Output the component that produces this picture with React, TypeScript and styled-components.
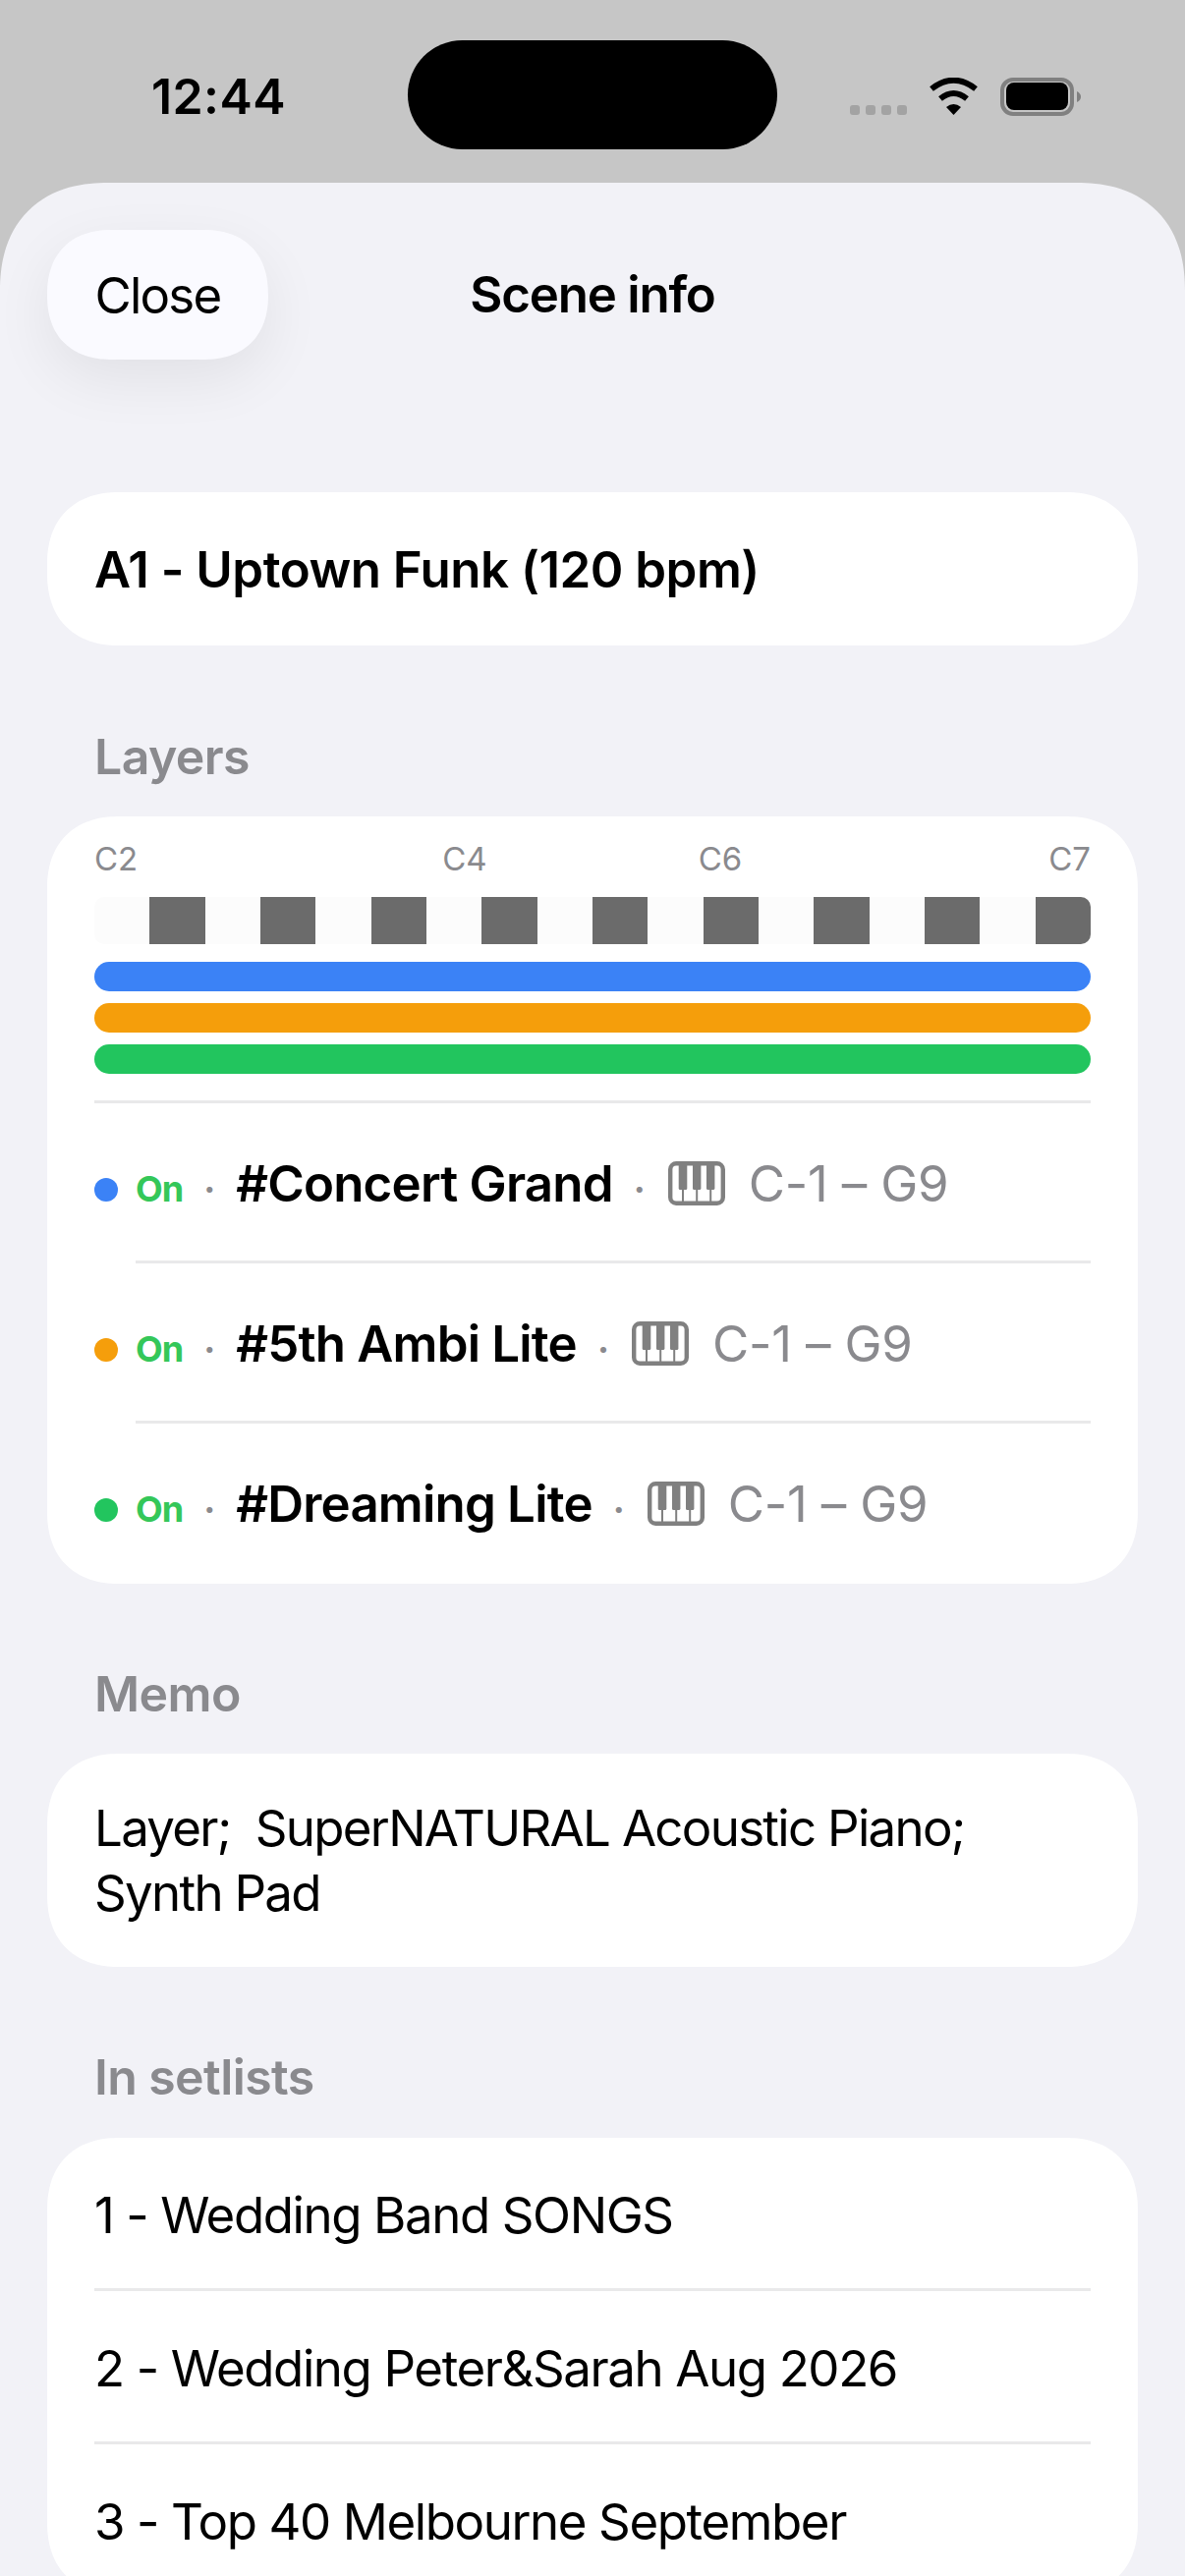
import styled, { createGlobalStyle } from "styled-components";

const GlobalStyle = createGlobalStyle`
  html, body {
    margin: 0;
    padding: 0;
    background: #c6c6c6;
  }
  body {
    font-family: Inter, "Noto Sans", "Liberation Sans", sans-serif;
    color: #000;
  }
`;

const Screen = styled.div`
  width: 1206px;
  height: 2622px;
  overflow: hidden;
  background: #c6c6c6;
`;

const StatusBar = styled.div`
  box-sizing: border-box;
  height: 186px;
  padding: 41px 106px 0 154px;
  display: grid;
  grid-template-columns: 261px 376px 1fr;
  grid-template-rows: 111px;
  align-items: center;
`;

const Clock = styled.div`
  font-size: 50px;
  font-weight: 600;
  line-height: 60px;
  letter-spacing: 0.4px;
  padding-top: 3px;
`;

const Island = styled.div`
  height: 111px;
  border-radius: 56px;
  background: #000;
`;

const StatusIcons = styled.svg`
  display: block;
  justify-self: end;
  margin-top: 3px;
`;

const Sheet = styled.div`
  height: 2436px;
  background: #f2f2f7;
  border-radius: 110px 110px 0 0;
  corner-shape: superellipse(1.2);
  padding: 48px 48px 0;
  box-sizing: border-box;
`;

const Header = styled.header`
  display: grid;
  grid-template-columns: 1fr auto 1fr;
  align-items: center;
  height: 132px;
  margin-bottom: 135px;
`;

const CloseButton = styled.button`
  justify-self: start;
  width: 225px;
  height: 132px;
  border: 0;
  border-radius: 66px;
  corner-shape: superellipse(1.2);
  background: #fafaff;
  box-shadow: 0 20px 60px rgba(0, 0, 0, 0.07);
  font: 400 51px Inter, sans-serif;
  letter-spacing: -1.8px;
  color: #000;
  padding: 0;
`;

const Title = styled.h1`
  margin: 0;
  font-size: 51px;
  font-weight: 600;
  line-height: 60px;
  letter-spacing: -1.2px;
`;

const SectionLabel = styled.div<{ $above?: number; $below?: number }>`
  padding-left: 48px;
  font-size: 50px;
  font-weight: 600;
  line-height: 60px;
  letter-spacing: -0.6px;
  color: #8a8a8e;
  margin: ${({ $above }) => $above ?? 82}px 0 ${({ $below }) => $below ?? 31}px;
`;

const Card = styled.section<{ $paddingBottom?: number }>`
  background: #fff;
  border-radius: 74px;
  corner-shape: superellipse(1.2);
  padding: 0 48px ${({ $paddingBottom }) => $paddingBottom ?? 0}px;
`;

const SceneName = styled.div`
  height: 156px;
  display: flex;
  align-items: center;
  font-size: 51px;
  font-weight: 600;
  letter-spacing: -0.5px;
`;

const Scale = styled.div`
  display: flex;
  padding-top: 23px;
  height: 59px;
`;

const ScaleNote = styled.span<{ $gap: number }>`
  font-size: 33px;
  line-height: 40px;
  color: #8a8a8e;
  margin-left: ${({ $gap }) => $gap}px;
`;

const Keyboard = styled.div`
  display: flex;
  height: 48px;
  background: #fcfcfc;
  border-radius: 10px;
  overflow: hidden;
`;

const Octave = styled.div`
  flex: 1;
  display: flex;
  justify-content: flex-end;
`;

const BlackKey = styled.div`
  width: 50%;
  background: #6b6b6b;
`;

const Bars = styled.div`
  display: flex;
  flex-direction: column;
  gap: 12px;
  padding: 18px 0 27px;
`;

const Bar = styled.div<{ $color: string }>`
  height: 30px;
  border-radius: 15px;
  background: ${({ $color }) => $color};
`;

const Divider = styled.div<{ $inset?: number }>`
  height: 3px;
  background: #e9e9ea;
  margin-left: ${({ $inset }) => $inset ?? 0}px;
`;

const LayerRow = styled.div`
  height: 160px;
  box-sizing: border-box;
  padding-top: 52px;
  display: flex;
  align-items: baseline;
  gap: 24px;
`;

const LayerDot = styled.span<{ $color: string }>`
  width: 24px;
  height: 24px;
  border-radius: 50%;
  background: ${({ $color }) => $color};
  margin-right: -6px;
`;

const LayerState = styled.span`
  font-size: 36px;
  font-weight: 700;
  letter-spacing: -1px;
  color: #34c759;
`;

const Separator = styled.span`
  width: 6px;
  display: flex;
  justify-content: center;
  font-size: 36px;
  font-weight: 700;
  color: #8a8a8e;
`;

const LayerName = styled.span`
  font-size: 51px;
  font-weight: 600;
  line-height: 60px;
  letter-spacing: -0.8px;
`;

const PianoIcon = styled.svg`
  display: block;
  align-self: flex-start;
  margin: 7px 0 0 2px;
`;

const LayerRange = styled.span`
  font-size: 51px;
  line-height: 60px;
  color: #8a8a8e;
  letter-spacing: -0.2px;
`;

const MemoText = styled.p`
  margin: 0;
  padding: 43px 0 42px;
  font-size: 51px;
  line-height: 66px;
  letter-spacing: -1.7px;
`;

const SetlistRow = styled.div`
  height: 153px;
  box-sizing: border-box;
  padding-top: 3px;
  display: flex;
  align-items: center;
  font-size: 51px;
  letter-spacing: -1.4px;
`;

const Piano = () => (
  <PianoIcon width="58" height="45" viewBox="0 0 58 45" fill="none">
    <rect x="2.2" y="2.2" width="53.6" height="40.6" rx="6" stroke="#808080" strokeWidth="4.4" />
    <rect x="10.7" y="2" width="8.6" height="27" rx="1.5" fill="#808080" />
    <rect x="25" y="2" width="8.4" height="27" rx="1.5" fill="#808080" />
    <rect x="39" y="2" width="8.4" height="27" rx="1.5" fill="#808080" />
    <rect x="14" y="28" width="2" height="15" fill="#808080" />
    <rect x="28.2" y="28" width="2" height="15" fill="#808080" />
    <rect x="42.2" y="28" width="2" height="15" fill="#808080" />
  </PianoIcon>
);

const layers = [
  { name: "#Concert Grand", color: "#3b82f6" },
  { name: "#5th Ambi Lite", color: "#f59e0b" },
  { name: "#Dreaming Lite", color: "#22c55e" },
];

const notes = [
  { label: "C2", gap: 0 },
  { label: "C4", gap: 310 },
  { label: "C6", gap: 215 },
  { label: "C7", gap: 312 },
];

const setlists = [
  "1 - Wedding Band SONGS",
  "2 - Wedding Peter&Sarah Aug 2026",
  "3 - Top 40 Melbourne September",
];

export default function App() {
  return (
    <Screen>
      <GlobalStyle />
      <StatusBar>
        <Clock>12:44</Clock>
        <Island />
        <StatusIcons width="235" height="39" viewBox="0 0 235 39" fill="none">
          <rect x="0" y="28" width="10" height="10" rx="3" fill="#a3a3a3" />
          <rect x="16" y="28" width="10" height="10" rx="3" fill="#a3a3a3" />
          <rect x="32" y="28" width="10" height="10" rx="3" fill="#a3a3a3" />
          <rect x="48" y="28" width="10" height="10" rx="3" fill="#a3a3a3" />
          <path d="M83 11.5Q105.5 -6 128 11.5" stroke="#000" strokeWidth="6" />
          <path d="M92 21.5Q105.5 10.5 119 21.5" stroke="#000" strokeWidth="6" />
          <path d="M105.5 38L98 30Q105.5 24 113 30Z" fill="#000" />
          <rect x="155" y="2" width="71" height="35" rx="11" stroke="#808080" strokeWidth="4" />
          <rect x="159" y="5" width="63" height="28" rx="8" fill="#000" />
          <path d="M231 14Q235 16 235 19.5Q235 23 231 25Z" fill="#808080" />
        </StatusIcons>
      </StatusBar>
      <Sheet>
        <Header>
          <CloseButton>Close</CloseButton>
          <Title>Scene info</Title>
        </Header>
        <Card>
          <SceneName>A1 - Uptown Funk (120 bpm)</SceneName>
        </Card>
        <SectionLabel $above={83}>Layers</SectionLabel>
        <Card $paddingBottom={3}>
          <Scale>
            {notes.map((n) => (
              <ScaleNote key={n.label} $gap={n.gap}>
                {n.label}
              </ScaleNote>
            ))}
          </Scale>
          <Keyboard>
            {Array.from({ length: 9 }).map((_, i) => (
              <Octave key={i}>
                <BlackKey />
              </Octave>
            ))}
          </Keyboard>
          <Bars>
            {layers.map((l) => (
              <Bar key={l.name} $color={l.color} />
            ))}
          </Bars>
          <Divider />
          {layers.map((l, i) => (
            <div key={l.name}>
              {i > 0 && <Divider $inset={42} />}
              <LayerRow>
                <LayerDot $color={l.color} />
                <LayerState>On</LayerState>
                <Separator>·</Separator>
                <LayerName>{l.name}</LayerName>
                <Separator>·</Separator>
                <Piano />
                <LayerRange>C-1 – G9</LayerRange>
              </LayerRow>
            </div>
          ))}
        </Card>
        <SectionLabel>Memo</SectionLabel>
        <Card>
          <MemoText>
            Layer;&nbsp; SuperNATURAL Acoustic Piano;
            <br />
            Synth Pad
          </MemoText>
        </Card>
        <SectionLabel $below={32}>In setlists</SectionLabel>
        <Card>
          {setlists.map((s, i) => (
            <div key={s}>
              {i > 0 && <Divider />}
              <SetlistRow>{s}</SetlistRow>
            </div>
          ))}
        </Card>
      </Sheet>
    </Screen>
  );
}
